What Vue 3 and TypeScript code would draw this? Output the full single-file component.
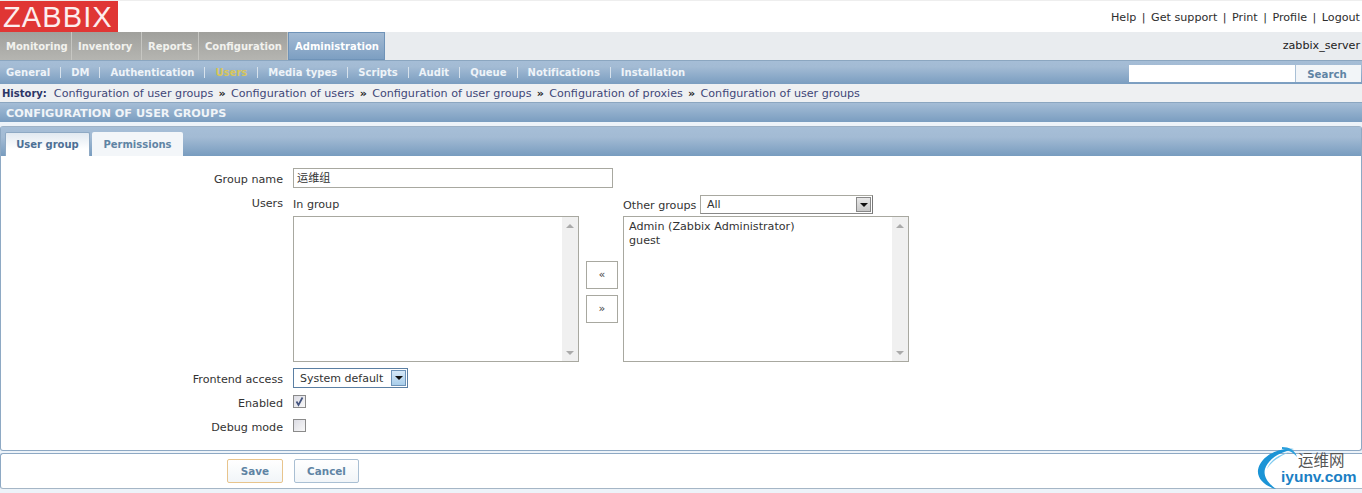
<script setup lang="ts">
const mainTabs: { label: string; width: number }[] = [
  { label: 'Monitoring', width: 72 },
  { label: 'Inventory', width: 70 },
  { label: 'Reports', width: 57 },
  { label: 'Configuration', width: 89 },
]
const subNav: string[] = ['General', 'DM', 'Authentication', 'Users', 'Media types', 'Scripts', 'Audit', 'Queue', 'Notifications', 'Installation']
const topLinks: string[] = ['Help', 'Get support', 'Print', 'Profile', 'Logout']
const history: string[] = ['Configuration of user groups', 'Configuration of users', 'Configuration of user groups', 'Configuration of proxies', 'Configuration of user groups']
</script>

<template>
  <div class="page">
    <header class="top">
      <div class="logo">ZABBIX</div>
      <nav class="top-links">
        <template v-for="(l, i) in topLinks" :key="l">
          <span v-if="i" class="tsep">|</span><span>{{ l }}</span>
        </template>
      </nav>
    </header>
    <div class="main-row">
      <div v-for="t in mainTabs" :key="t.label" class="mtab" :style="{ width: t.width + 'px' }">{{ t.label }}</div>
      <div class="mtab active">Administration</div>
      <div class="server">zabbix_server</div>
    </div>
    <div class="sub-row">
      <div class="sub-items">
        <template v-for="(s, i) in subNav" :key="s">
          <span v-if="i" class="ssep"></span>
          <span class="sitem" :class="{ cur: s === 'Users' }">{{ s }}</span>
        </template>
      </div>
      <div class="search">
        <div class="search-in"></div>
        <div class="search-btn">Search</div>
      </div>
    </div>
    <div class="history">
      <b>History:</b>
      <template v-for="(h, i) in history" :key="i">
        <span v-if="i" class="hsep">»</span><span class="hlink">{{ h }}</span>
      </template>
    </div>
    <div class="title">CONFIGURATION OF USER GROUPS</div>
    <section class="card">
      <div class="tabs">
        <div class="tab on">User group</div>
        <div class="tab">Permissions</div>
      </div>
      <div class="form">
        <div class="lbl l1">Group name</div>
        <div class="name-in">运维组</div>

        <div class="lbl l2">Users</div>
        <div class="users">
          <div class="col">
            <div class="cap first">In group</div>
            <div class="list"><div class="sb"><i class="up"></i><i class="down"></i></div></div>
          </div>
          <div class="moves">
            <div class="mv">«</div>
            <div class="mv">»</div>
          </div>
          <div class="col">
            <div class="cap other"><span class="other-lbl">Other groups</span>
              <div class="sel wide"><span>All</span><span class="arr"><i></i></span></div>
            </div>
            <div class="list">
              <div class="items"><div>Admin (Zabbix Administrator)</div><div>guest</div></div>
              <div class="sb"><i class="up"></i><i class="down"></i></div>
            </div>
          </div>
        </div>

        <div class="lbl l3">Frontend access</div>
        <div class="sel focus"><span class="sel-txt">System default</span><span class="arr blue"><i></i></span></div>

        <div class="lbl l4">Enabled</div>
        <div class="chk c1">
          <svg width="13" height="13" viewBox="0 0 13 13"><path d="M3.5 6.5 L5.5 10 L9.5 2.5" fill="none" stroke="#44547f" stroke-width="1.7"/></svg>
        </div>

        <div class="lbl l5">Debug mode</div>
        <div class="chk c2"></div>
      </div>
    </section>
    <section class="foot">
      <div class="btn save">Save</div>
      <div class="btn">Cancel</div>
    </section>
    <div class="mark">
      <svg width="44" height="48" viewBox="0 0 44 48">
        <path d="M38 5 C20 3 4 14 2 26 C1 34 8 42 20 45 C12 39 7 32 9 25 C12 15 24 8 38 5 Z" fill="#1b94d6"/>
        <path d="M34 8 C24 10 14 16 11 25 C15 18 24 12 34 8 Z" fill="#7fcbf0"/>
        <path d="M26 3 C33 3 39 6 41 13 C37 8 32 6 26 5 Z" fill="#2a9fdc"/>
      </svg>
      <div class="mark-cn">运维网</div>
      <div class="mark-en">iyunv.com</div>
    </div>
  </div>
</template>

<style>
html, body { margin: 0; background: #fff; }
</style>

<style scoped>
.page {
  position: relative;
  width: 1362px;
  height: 493px;
  overflow: hidden;
  background: #edf3f9;
  font-family: "DejaVu Sans", Verdana, "Noto Sans CJK SC", sans-serif;
  font-size: 11.15px;
  color: #2d2d2d;
}
.top {
  height: 32px;
  box-sizing: border-box;
  background: #fff;
  display: flex;
  justify-content: space-between;
  align-items: flex-start;
  border-top: 1px solid #eee;
}
.logo {
  width: 118px;
  height: 31px;
  background: #e03634;
  color: #fdeeee;
  font-family: "Liberation Sans", Arial, sans-serif;
  font-size: 29px;
  line-height: 33px;
  letter-spacing: 1.1px;
  padding-left: 3px;
  box-sizing: border-box;
  white-space: nowrap;
  overflow: hidden;
}
.top-links {
  display: flex;
  margin: 10px 2px 0 0;
  line-height: 14px;
}
.tsep { margin: 0 5.5px; }
.main-row {
  height: 28px;
  background: #e9ecef;
  display: flex;
  align-items: stretch;
}
.mtab {
  box-sizing: border-box;
  background: linear-gradient(#a0a09c, #b5b5b1);
  color: #f2f2ee;
  font-weight: bold;
  font-size: 10px;
  line-height: 29px;
  padding-left: 6px;
  border-right: 1px solid #c6c6c2;
  white-space: nowrap;
}
.mtab.active {
  width: 97px;
  background: linear-gradient(#a3bad3, #7d9fc2);
  color: #fff;
  border: 1px solid #6f93b8;
  line-height: 27px;
  padding-left: 6px;
}
.server { margin-left: auto; padding-right: 2px; line-height: 28px; color: #222; }
.sub-row {
  height: 24px;
  box-sizing: border-box;
  border-top: 1px solid #8ba6c0;
  background: linear-gradient(#a5bdd6 0, #a3bbd4 25%, #7a9dc0 100%);
  display: flex;
  justify-content: space-between;
  padding-left: 6px;
}
.sub-items { display: flex; align-items: center; height: 22px; }
.sitem { color: #eef3f8; font-weight: bold; font-size: 10px; letter-spacing: 0.02px; white-space: nowrap; }
.sitem.cur { color: #d8c65a; }
.ssep { width: 1px; height: 11px; background: #d7e2ec; margin: 0 10px; }
.search {
  display: flex;
  height: 17px;
  margin-top: 4px;
  margin-right: 1px;
}
.search-in { width: 166px; background: #fff; }
.search-btn {
  width: 66px;
  box-sizing: border-box;
  padding-right: 3px;
  border-left: 1px solid #a9c0d6;
  background: #f2f5f8;
  color: #5f84a4;
  font-weight: bold;
  font-size: 10.2px;
  text-align: center;
  line-height: 19px;
}
.history {
  height: 18px;
  background: #eef0f2;
  line-height: 20px;
  padding-left: 2px;
  color: #3f4778;
  white-space: nowrap;
}
.history b { color: #2c3566; margin-right: 7px; font-size: 10px; }
.hsep { margin: 0 5.25px; font-weight: bold; color: #222; }
.title {
  height: 20px;
  box-sizing: border-box;
  border-top: 1px solid #8ba6c0;
  background: linear-gradient(#a5bdd6, #7a9dc0);
  color: #f0f4f8;
  font-weight: bold;
  font-size: 11.25px;
  line-height: 21px;
  padding-left: 6px;
}
.card {
  margin-top: 4px;
  height: 325px;
  box-sizing: border-box;
  background: #fff;
  border: 1px solid #8ea9c4;
  border-top-color: #9eb2c6;
  border-radius: 3px;
}
.tabs {
  height: 29px;
  background: linear-gradient(#a6bed7 0, #a3bbd4 35%, #789cbf 100%);
  display: flex;
  align-items: flex-end;
  gap: 2px;
  padding-left: 4px;
}
.tab {
  box-sizing: border-box;
  width: 91px;
  height: 24px;
  line-height: 25px;
  text-align: center;
  background: #f3f6f9;
  color: #5f84a4;
  font-weight: bold;
  font-size: 10px;
  border-radius: 2px 2px 0 0;
}
.tab.on {
  width: 85px;
  line-height: 23px;
  background: linear-gradient(#e1e9f1, #fff 70%);
  color: #4d7095;
  border: 1px solid #8ea9c4;
  border-bottom: 0;
}
.form {
  display: grid;
  grid-template-columns: 282px auto;
  column-gap: 10px;
  justify-content: start;
  justify-items: start;
  padding-top: 12px;
}
.lbl { justify-self: end; text-align: right; line-height: 14px; color: #333; }
.l1 { margin-top: 5px; }
.l2 { margin-top: 9px; }
.l3 { margin-top: 11px; }
.l4 { margin-top: 9px; }
.l5 { margin-top: 10px; }
.name-in {
  width: 320px;
  height: 20px;
  box-sizing: border-box;
  border: 1px solid #a8a8a0;
  padding-left: 3px;
  line-height: 19px;
  color: #333;
}
.users { display: flex; margin-top: 7px; width: 616px; }
.col { width: 286px; }
.cap { color: #333; }
.cap.first { line-height: 20px; height: 20px; margin-bottom: 1px; }
.cap.other { display: flex; align-items: center; height: 19px; margin-bottom: 2px; }
.other-lbl { width: 77px; white-space: nowrap; padding-top: 1px; }
.list {
  height: 146px;
  box-sizing: border-box;
  border: 1px solid #a8a8a0;
  display: flex;
  justify-content: space-between;
  background: #fff;
}
.items { padding: 3px 0 0 5px; line-height: 14px; color: #333; }
.sb {
  margin-left: auto;
  width: 16px;
  background: #f0f0f0;
  position: relative;
}
.sb i { position: absolute; left: 4px; width: 0; height: 0; border-left: 4px solid transparent; border-right: 4px solid transparent; }
.sb .up { top: 7px; border-bottom: 4px solid #aaa; }
.sb .down { bottom: 6px; border-top: 4px solid #aaa; }
.moves {
  width: 44px;
  box-sizing: border-box;
  padding: 66px 0 0 7px;
}
.mv {
  width: 32px;
  height: 28px;
  box-sizing: border-box;
  border: 1px solid #a8a8a0;
  text-align: center;
  line-height: 25px;
  margin-bottom: 6px;
  color: #444;
  background: #fff;
}
.sel {
  display: flex;
  justify-content: space-between;
  align-items: center;
  box-sizing: border-box;
  width: 115px;
  height: 20px;
  margin-top: 6px;
  border: 1px solid #5b7fa3;
  padding: 0 1px 0 6px;
  color: #333;
  font-size: 11px;
  white-space: nowrap;
}
.sel-txt { padding-top: 1px; }
.sel.wide { width: 173px; height: 19px; margin-top: 0; border: 1px solid #a8a8a0; border-color: #a8a8a0 #777 #888 #a8a8a0; background: #fff; }
.arr {
  width: 15px;
  height: 15px;
  background: linear-gradient(#e8e8e8, #c8c8c8);
  border: 1px solid #888;
  box-sizing: border-box;
  display: flex;
  align-items: center;
  justify-content: center;
}
.arr i { width: 0; height: 0; border-left: 4px solid transparent; border-right: 4px solid transparent; border-top: 4px solid #111; }
.arr.blue { background: linear-gradient(#d6e8f7, #a8cdea); border-color: #6d93b8; height: 16px; }
.chk {
  width: 13px;
  height: 13px;
  box-sizing: border-box;
  border: 1px solid #8a8a8a;
  background: linear-gradient(135deg, #dcdce4, #f8f8f8);
  position: relative;
  display: flex;
}
.c1 { margin-top: 7px; }
.c2 { margin-top: 8px; }
.chk svg { position: absolute; left: -1px; top: -1px; }
.foot {
  margin-top: 2px;
  height: 36px;
  box-sizing: border-box;
  border: 1px solid #8ea9c4;
  border-bottom-color: #a5b6c6;
  border-right: 0;
  border-radius: 3px 0 0 3px;
  background: #fff;
  display: flex;
  align-items: center;
  padding: 0 0 0 226px;
  gap: 11px;
}
.btn {
  width: 65px;
  height: 24px;
  box-sizing: border-box;
  border: 1px solid #a9bfd3;
  border-radius: 2px;
  background: linear-gradient(#fff, #f1f5f8);
  color: #5f84a4;
  font-weight: bold;
  font-size: 10.4px;
  text-align: center;
  line-height: 23px;
}
.btn.save { width: 56px; border-color: #e8c48c; }
.mark { position: absolute; left: 1256px; top: 444px; width: 106px; height: 49px; }
.mark svg { position: absolute; left: 0; top: 0; }
.mark-cn {
  position: absolute;
  left: 42px;
  top: 6px;
  font-family: "Noto Sans CJK SC", sans-serif;
  font-size: 15.5px;
  line-height: 18px;
  color: #555;
}
.mark-en {
  position: absolute;
  left: 25px;
  top: 24px;
  font-family: "Liberation Sans", Arial, sans-serif;
  font-weight: bold;
  font-size: 15.5px;
  line-height: 18px;
  color: #1b7fc4;
}
</style>
